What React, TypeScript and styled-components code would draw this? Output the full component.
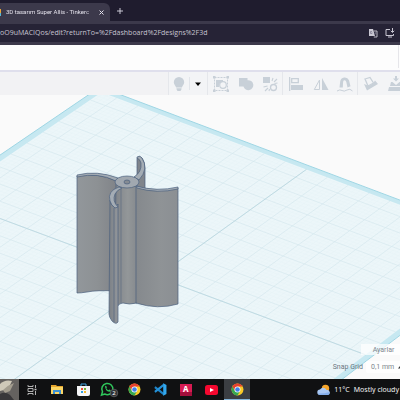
import React from 'react';
import styled, { createGlobalStyle } from 'styled-components';

const GlobalStyle = createGlobalStyle`
  * { box-sizing: border-box; }
  body { margin: 0; background: #fafafa; font-family: "Noto Sans", "Open Sans", sans-serif; }
  button, input { font: inherit; color: inherit; border: 0; padding: 0; margin: 0; background: none; }
`;

const Page = styled.div`
  display: flex;
  flex-direction: column;
  min-height: 100vh;
  overflow: hidden;
`;

const TabStrip = styled.div`
  display: flex;
  align-items: flex-end;
  height: 21px;
  background: #1f1c2e;
  color: #e4e2ec;
`;

const Tab = styled.div`
  display: flex;
  align-items: center;
  width: 110px;
  height: 18px;
  padding-right: 3px;
  background: #3c394b;
  border-radius: 0 6px 0 0;
`;

const Favicon = styled.span`
  width: 1px;
  height: 7px;
  margin-right: 5px;
  background: linear-gradient(#e9a63c 50%, #56b7d8 50%);
`;

const TabTitle = styled.span`
  flex: 1;
  white-space: nowrap;
  font-family: Roboto, sans-serif;
  font-size: 6px;
  line-height: 12px;
  mask-image: linear-gradient(90deg, #000 88%, rgba(0, 0, 0, 0.3));
`;

const StripButton = styled.button`
  display: grid;
  place-items: center;
  width: 12px;
  height: 12px;
  margin: 0 0 4px 4px !important;
`;

const CloseButton = styled(StripButton)`
  margin: 0 !important;
`;

const AddressBar = styled.div`
  height: 24px;
  padding: 3px 0;
  background: #3c394b;
`;

const Omnibox = styled.div`
  display: flex;
  align-items: center;
  gap: 6px;
  height: 18px;
  padding-right: 5px;
  background: #262336;
  color: #c6c4d1;
`;

const Url = styled.input`
  flex: 1;
  min-width: 0;
  font-family: "Open Sans", sans-serif !important;
  font-size: 7px !important;
  line-height: 12px !important;
`;

const IconButton = styled.button`
  display: grid;
  place-items: center;
  width: 11px;
  height: 12px;
`;

const Header = styled.header`
  height: 27px;
  padding-right: 1px;
  background: #fdfdfd;
  border-bottom: 2px solid #dfdfec;
`;

const HeaderEdge = styled.div`
  height: 23px;
  border-right: 1px solid #e6e6ea;
`;

const Toolbar = styled.div`
  display: flex;
  flex-shrink: 0;
  height: 23px;
  padding-left: 168px;
  overflow: hidden;
  background: #f2f2f4;
`;

const ToolGroup = styled.div`
  display: flex;
  flex-shrink: 0;
  border-left: 1px solid #e5e7eb;
  background: #f3f4f6;
`;

const Tool = styled.button<{ $width?: number; $divided?: boolean }>`
  display: grid;
  flex-shrink: 0;
  place-items: center;
  width: ${p => p.$width ?? 25}px;
  height: 23px;
  background: ${p => (p.$divided ? 'linear-gradient(#e2e5ea, #e2e5ea) left center / 1px 13px no-repeat' : 'none')} !important;
`;

const Workspace = styled.main`
  display: grid;
  flex: 1;
  min-height: 284px;
  background: #fafafa;
  > * { grid-area: 1 / 1; }
`;

const Scene = styled.svg`
  width: 100%;
  height: 100%;
  min-height: 0;
`;

const Settings = styled.div`
  z-index: 1;
  display: flex;
  flex-direction: column;
  align-items: flex-end;
  align-self: end;
  justify-self: end;
  gap: 6px;
  padding-bottom: 6px;
  color: #7d868c;
  font-family: Roboto, sans-serif;
  font-size: 7px;
  line-height: 10px;
`;

const SettingsButton = styled.button`
  width: 39px;
  height: 11px;
  padding-left: 6px !important;
  background: rgba(255, 255, 255, 0.7) !important;
`;

const SnapRow = styled.div`
  display: flex;
  align-items: center;
  gap: 3px;
  color: #68757e;
`;

const SnapButton = styled.button`
  display: flex;
  align-items: center;
  justify-content: space-between;
  width: 34px;
  height: 12px;
  padding-left: 5px !important;
  border-radius: 2px 0 0 2px;
  background: rgba(255, 255, 255, 0.8) !important;
  color: #7d868c !important;
  white-space: nowrap;
`;

const Taskbar = styled.footer`
  display: flex;
  align-items: stretch;
  height: 21px;
  background: #101112;
  color: #f2f2f2;
`;

const Thumb = styled.svg`
  flex-shrink: 0;
  width: 19px;
  height: 21px;
`;

const Apps = styled.nav`
  display: grid;
  grid-template-columns: repeat(9, 1fr);
  width: 231px;
`;

const AppButton = styled.button<{ $active?: boolean }>`
  display: grid;
  place-items: center;
  background: ${p => (p.$active ? '#3b3e42' : 'transparent')} !important;
  box-shadow: ${p => (p.$active ? 'inset 0 -1px #84b4d8' : 'none')};
  svg { overflow: visible; }
`;

const CadTile = styled.span`
  display: flex;
  justify-content: center;
  width: 12px;
  height: 12px;
  background: linear-gradient(#d81b52 66%, #a30f3b 66%);
  color: #fff;
  font-size: 8px;
  font-weight: 700;
  line-height: 9px;
`;

const Weather = styled.button`
  display: flex;
  align-items: center;
  gap: 4px;
  margin-left: auto !important;
  padding-right: 1px !important;
  font-size: 7px !important;
  white-space: nowrap;
`;

type Pt = [number, number];

const CORNERS: Pt[] = [[100, 87], [519, 245], [216, 475], [-229, 311]];

// Projects plane coordinates (0..1 on both axes) into the view.
function project(u: number, v: number): Pt {
  const [[x0, y0], [x1, y1], [x2, y2], [x3, y3]] = CORNERS;
  const dx1 = x1 - x2, dx2 = x3 - x2, dy1 = y1 - y2, dy2 = y3 - y2;
  const sx = x0 - x1 + x2 - x3, sy = y0 - y1 + y2 - y3;
  const d = dx1 * dy2 - dx2 * dy1;
  const g = (sx * dy2 - dx2 * sy) / d;
  const h = (dx1 * sy - sx * dy1) / d;
  const w = g * u + h * v + 1;
  return [
    ((x1 - x0 + g * x1) * u + (x3 - x0 + h * x3) * v + x0) / w,
    ((y1 - y0 + g * y1) * u + (y3 - y0 + h * y3) * v + y0) / w,
  ];
}

const quad = (a: number, b: number) =>
  [project(a, a), project(b, a), project(b, b), project(a, b)].map(p => p.join(',')).join(' ');

const segment = (a: Pt, b: Pt) => `M${a.join(' ')}L${b.join(' ')}`;

const gridPath = (steps: number[]) =>
  steps.map(t => segment(project(t, 0.014), project(t, 0.986)) + segment(project(0.014, t), project(0.986, t))).join('');

const MINOR = Array.from({ length: 19 }, (_, i) => (i + 1) / 20);
const FINE = Array.from({ length: 99 }, (_, i) => (i + 1) / 100);

const Model = () => (
  <g stroke="#4a607e" strokeWidth="0.7" strokeLinejoin="round">
    <path d="M137 158Q139 155 142 158Q145 162 145 168V190H137Z" fill="#80858c" />
    <path d="M137 157Q140 155 142 158Q149 169 139 180L134 177Q142 172 141 163Q140 159 137 158Z" fill="#a4acb4" />
    <path d="M77 176Q97 172 117 181V291Q96 290 87 292Q81 293 77 293Z" fill="url(#bladeL)" />
    <path d="M77 175Q97 170 118 178L116 181Q98 172 77 177Z" fill="#a4acb4" />
    <path d="M116 184L137 186V303Q129 305 123 303Q119 303 117 307H114Z" fill="url(#hub)" />
    <path d="M136 186Q156 194 178 188V304Q158 310 136 303Z" fill="url(#bladeR)" />
    <path d="M136 186Q157 192 178 187V189Q157 194 137 188Z" fill="#a4acb4" />
    <ellipse cx="127" cy="182" rx="12" ry="6" fill="#a1a8b0" />
    <ellipse cx="127" cy="182" rx="3" ry="2" fill="#858b93" />
    <path d="M110 200Q111 206 115 208L118 204V322Q116 325 112 321Q109 317 109 314Z" fill="url(#bladeF)" />
    <path d="M114 208V322" strokeWidth="0.6" />
    <path d="M119 187Q107 191 110 201Q111 205 115 208L118 207Q112 201 115 194Q117 190 122 188Z" fill="#a4acb4" />
    <path d="M121 189V303" strokeWidth="0.6" opacity="0.8" />
  </g>
);

const GREY = '#c8d0d8';

const Glyph = ({ children }: { children: React.ReactNode }) => (
  <svg width="16" height="16" viewBox="0 0 16 16" fill={GREY} aria-hidden="true">{children}</svg>
);

const BulbIcon = () => (
  <Glyph>
    <path d="M8 1a5.200 5.200 0 0 0-5.200 5.200c0 2.300 1.800 3.300 2.300 5.300h5.800c.5-2 2.300-3 2.300-5.300A5.200 5.200 0 0 0 8 1zM5.500 12.300h5v1l-1 1.600h-3l-1-1.600z" />
  </Glyph>
);

const GroupIcon = () => (
  <Glyph>
    <path d="M1.500 1.500h13v13h-13z" fill="none" stroke={GREY} strokeDasharray="2 1" />
    <path d="M3 4h7v2a4 4 0 0 0-4 5H3z" />
    <circle cx="10" cy="9" r="3.300" fill="#f3f4f6" stroke={GREY} strokeWidth="1.200" />
    <path d="M0 0h2.500v2.500H0zM13.500 0H16v2.500h-2.500zM0 13.500h2.500V16H0zM13.500 13.500H16V16h-2.500z" />
  </Glyph>
);

const UniteIcon = () => (
  <Glyph><path d="M1 2h8.500v2.200a5 5 0 1 1-4 6.300H1z" /></Glyph>
);

const SeparateIcon = () => (
  <Glyph>
    <path d="M1 1h7v6H1z" />
    <circle cx="11.500" cy="11.500" r="3" fill="none" stroke={GREY} strokeWidth="1.300" />
    <path d="M10 5l1-3M12 6l3-3M12.500 7.500l3-.5M5.500 10l-4 1M6 12l-3 3M7.500 13l-.5 2" stroke={GREY} strokeWidth="1.100" />
  </Glyph>
);

const AlignIcon = () => (
  <Glyph>
    <path d="M1 1h1.300v14H1zM3 9h12v5H3z" />
    <path d="M3.700 2.700h6.600v4H3.700z" fill="none" stroke={GREY} strokeWidth="1.300" />
  </Glyph>
);

const MirrorIcon = () => (
  <Glyph>
    <path d="M9 2v12h6.500z" />
    <path d="M6.500 4v9.500H1.300z" fill="none" stroke={GREY} />
  </Glyph>
);

const MagnetIcon = () => (
  <Glyph>
    <path d="M2.500 11.500L3.200 5.500A4.600 4.600 0 0 1 12 4.300l1.500 6-3 1.200L9.300 6Q8.800 4 7.300 4.300 6.200 4.600 6.100 6l-.3 5.500z" />
    <path d="M0 15q3-2 5-.5t5-.5 5.500 1" fill="none" stroke={GREY} />
  </Glyph>
);

const WorkplaneIcon = () => (
  <Glyph>
    <path d="M1 8l3 6.500L15 8l-3-3.500-2 3-4 2.500z" />
    <path d="M2 3l5-1.500L10.500 7 5 10z" fill="#f3f4f6" stroke={GREY} strokeWidth="1.300" />
  </Glyph>
);

const DropIcon = () => (
  <Glyph>
    <path d="M7 0h2v2.500h2L8 5.500l-3-3h2zM3 6h1.500L8 9l3.500-3H13l1 4H2zM1 11h14l1 4H0z" />
  </Glyph>
);

const Chrome = () => (
  <svg width="13" height="13" viewBox="0 0 24 24" aria-hidden="true">
    <circle cx="12" cy="12" r="11" fill="#f9c926" />
    <path d="M12 1A11 11 0 0 0 2.500 6.500L7.200 14.700 12 12V6.500h9.500A11 11 0 0 0 12 1z" fill="#e5412f" />
    <path d="M2.500 6.500A11 11 0 0 0 12 23l4.800-8.300L12 12l-4.800 2.700z" fill="#36a852" />
    <circle cx="12" cy="12" r="5.500" fill="#fff" />
    <circle cx="12" cy="12" r="4.200" fill="#3f80ea" />
  </svg>
);

const TaskViewIcon = () => (
  <svg width="10" height="10" viewBox="0 0 10 10" fill="none" stroke="#c4c4c4" aria-hidden="true">
    <path d="M1 3.500h5v3H1zM1 0v1.500h5V0M1 10V8.500h5V10M8.500 0v3M8.500 6v4" strokeWidth="0.900" />
    <path d="M7.500 4.500h2" strokeWidth="1.500" />
  </svg>
);

const FolderIcon = () => (
  <svg width="12" height="11" viewBox="0 0 12 11" aria-hidden="true">
    <path d="M0 1h5l1 1h6v8H0z" fill="#e5a52d" />
    <path d="M0 3h12v7H0z" fill="#fbd665" />
    <path d="M2 10V6h8v4H8V8H4v2z" fill="#3c91d4" />
  </svg>
);

const StoreIcon = () => (
  <svg width="13" height="13" viewBox="0 0 13 13" aria-hidden="true">
    <path d="M4 3V1h5v2" fill="none" stroke="#41a5e0" />
    <path d="M0 3h13v8q0 2-2 2H2q-2 0-2-2z" fill="#f5f6f7" />
    <path d="M4 5h2v2H4z" fill="#e8533a" /><path d="M7 5h2v2H7z" fill="#72b53c" />
    <path d="M4 8h2v2H4z" fill="#2f9fe0" /><path d="M7 8h2v2H7z" fill="#f3b82b" />
  </svg>
);

const WhatsAppIcon = () => (
  <svg width="18" height="15" viewBox="0 0 18 15" aria-hidden="true">
    <path d="M1.500 13l1-3.200a5.600 5.600 0 1 1 2.300 2.200z" fill="#101112" stroke="#2fc65b" strokeWidth="1.500" />
    <path d="M5 4.200q1-1 1.500.2l.4 1-.6.8q.7 1.500 2.200 2l.8-.8 1.500.8q0 1.600-1.700 1.600Q5.500 9.200 5 4.200z" fill="#2fc65b" />
    <circle cx="14" cy="11" r="3.800" fill="#303236" stroke="#777" strokeWidth="0.600" />
    <text x="14" y="13" fontSize="6" fill="#fff" textAnchor="middle">2</text>
  </svg>
);

const CodeIcon = () => (
  <svg width="13" height="13" viewBox="0 0 24 24" aria-hidden="true">
    <path d="M1 8l2-2 15 12v5L1 9.500z" fill="#1d83c8" />
    <path d="M1 16l2 2L18 6V1L1 14.500z" fill="#2491d8" />
    <path d="M17 .5l6 3v17l-6 3z" fill="#32a8ee" />
  </svg>
);

const VideoIcon = () => (
  <svg width="13" height="10" viewBox="0 0 13 10" aria-hidden="true">
    <rect width="13" height="10" rx="2.500" fill="#f5082f" />
    <path d="M5 3l4 2-4 2z" fill="#fff" />
  </svg>
);

const WeatherIcon = () => (
  <svg width="13" height="12" viewBox="0 0 13 12" aria-hidden="true">
    <circle cx="8.500" cy="4.500" r="3.700" fill="#f5a52b" />
    <path d="M3 11a2.700 2.700 0 0 1 0-5.400 3.600 3.600 0 0 1 6.600.5A2.500 2.500 0 1 1 10.500 11z" fill="#a9c8f3" />
    <path d="M1 9.500q5 .5 11.500-1.500Q13 11 10.500 11H3q-1.500 0-2-1.500z" fill="#84aeea" />
  </svg>
);

const APPS = [
  { name: 'Task view', icon: <TaskViewIcon /> },
  { name: 'Explorer', icon: <FolderIcon /> },
  { name: 'Store', icon: <StoreIcon /> },
  { name: 'WhatsApp', icon: <WhatsAppIcon /> },
  { name: 'Chrome', icon: <Chrome /> },
  { name: 'Code', icon: <CodeIcon /> },
  { name: 'AutoCAD', icon: <CadTile>A</CadTile> },
  { name: 'YouTube', icon: <VideoIcon /> },
  { name: 'Chrome window', icon: <Chrome />, active: true },
];

export default function App() {
  return (
    <Page>
      <GlobalStyle />
      <TabStrip>
        <Tab>
          <Favicon />
          <TabTitle>3D tasarım Super Allis - Tinkerc</TabTitle>
          <CloseButton aria-label="Close tab">
            <svg width="5" height="5" viewBox="0 0 5 5" stroke="#e4e2ec"><path d="M.5.5l4 4M4.500.5l-4 4" /></svg>
          </CloseButton>
        </Tab>
        <StripButton aria-label="New tab">
          <svg width="6" height="6" viewBox="0 0 6 6" stroke="#dddbe6"><path d="M3 0v6M0 3h6" strokeWidth="0.900" /></svg>
        </StripButton>
      </TabStrip>
      <AddressBar>
        <Omnibox>
          <Url aria-label="Address" defaultValue="oO9uMACIQos/edit?returnTo=%2Fdashboard%2Fdesigns%2F3d" />
          <IconButton aria-label="Translate">
            <svg width="10" height="10" viewBox="0 0 10 10">
              <path d="M1 1h4l2 7H1z" fill="#c9c7d2" />
              <path d="M5.500 3H9v6H5.800" fill="none" stroke="#c9c7d2" strokeWidth="0.900" />
              <path d="M6.500 5H8.500M7.500 4.300q0 2-1 2.700M4 3.500H2.500v2H4v-1" fill="none" stroke="#77748a" strokeWidth="0.700" />
            </svg>
          </IconButton>
          <IconButton aria-label="Install">
            <svg width="10" height="10" viewBox="0 0 10 10" fill="none" stroke="#c9c7d2">
              <path d="M5 1.500H1v6h7.500V6M3 9h4M7.500 0v4M5.800 2.800L7.500 4.500l1.700-1.700" />
            </svg>
          </IconButton>
        </Omnibox>
      </AddressBar>
      <Header><HeaderEdge /></Header>
      <Toolbar>
        <ToolGroup>
          <Tool $width={20} aria-label="Show all"><BulbIcon /></Tool>
          <Tool $width={18} $divided aria-label="More visibility options">
            <svg width="6" height="4" viewBox="0 0 6 4"><path d="M0 .5h6L3 4z" fill="#000" /></svg>
          </Tool>
        </ToolGroup>
        <ToolGroup>
          <Tool aria-label="Group"><GroupIcon /></Tool>
          <Tool aria-label="Unite"><UniteIcon /></Tool>
          <Tool $width={24} aria-label="Ungroup"><SeparateIcon /></Tool>
        </ToolGroup>
        <ToolGroup>
          <Tool aria-label="Align"><AlignIcon /></Tool>
          <Tool aria-label="Mirror"><MirrorIcon /></Tool>
          <Tool $width={24} aria-label="Snap"><MagnetIcon /></Tool>
        </ToolGroup>
        <ToolGroup>
          <Tool aria-label="Workplane"><WorkplaneIcon /></Tool>
          <Tool aria-label="Drop"><DropIcon /></Tool>
        </ToolGroup>
      </Toolbar>
      <Workspace>
        <Scene viewBox="0 95 400 284" preserveAspectRatio="xMidYMid slice" role="img" aria-label="Design canvas">
          <defs>
            <linearGradient id="bladeL"><stop stopColor="#92979b" /><stop offset=".5" stopColor="#8d9194" /><stop offset="1" stopColor="#808388" /></linearGradient>
            <linearGradient id="bladeR"><stop stopColor="#85898d" /><stop offset=".6" stopColor="#8f9396" /><stop offset="1" stopColor="#8b8f93" /></linearGradient>
            <linearGradient id="hub"><stop stopColor="#7f8388" /><stop offset=".6" stopColor="#939799" /><stop offset="1" stopColor="#868a8e" /></linearGradient>
            <linearGradient id="bladeF"><stop stopColor="#7b8086" /><stop offset="1" stopColor="#93979b" /></linearGradient>
          </defs>
          <polygon points={quad(0, 1)} fill="#c6e8f1" stroke="#9fd6e4" />
          <polygon points={quad(0.014, 0.986)} fill="#ecf6f9" />
          <path d={gridPath(FINE)} stroke="#d5e8ee" strokeWidth="0.4" opacity="0.3" />
          <path d={gridPath(MINOR)} stroke="#c6dee5" strokeWidth="0.6" opacity="0.6" />
          <path d={gridPath([0.5])} stroke="#b8d5de" strokeWidth="0.8" />
          <Model />
        </Scene>
        <Settings>
          <SettingsButton>Ayarlar</SettingsButton>
          <SnapRow>
            <span id="snap-label">Snap Grid</span>
            <SnapButton aria-labelledby="snap-label">
              0,1 mm
              <svg width="2" height="3" viewBox="0 0 2 3"><path d="M0 2.500L2 0v2.500z" fill="#333" /></svg>
            </SnapButton>
          </SnapRow>
        </Settings>
      </Workspace>
      <Taskbar>
        <Thumb viewBox="0 0 19 21" aria-hidden="true">
          <path d="M0 0h19v21H0z" fill="#65625f" />
          <path d="M0 5Q5 0 12 2L9 8 4 11 0 12z" fill="#cfc9b8" />
          <path d="M3 11Q8 6 14 4L10 12 5 14z" fill="#a39d8e" />
          <path d="M0 15Q5 12 10 16L14 21H0z" fill="#39383a" />
        </Thumb>
        <Apps>
          {APPS.map(a => (
            <AppButton key={a.name} $active={a.active} aria-label={a.name}>{a.icon}</AppButton>
          ))}
        </Apps>
        <Weather>
          <WeatherIcon />
          <span>11°C</span>
          <span>Mostly cloudy</span>
        </Weather>
      </Taskbar>
    </Page>
  );
}
